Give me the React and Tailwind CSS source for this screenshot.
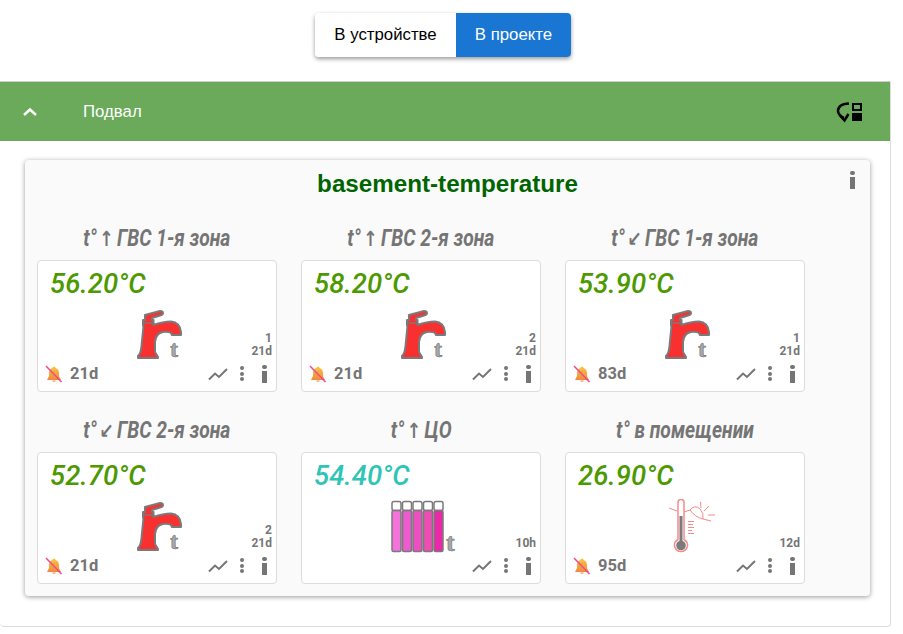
import React from 'react';

const Faucet = () => (
  <svg width="52" height="56" viewBox="0 0 52 56" className="block">
    <path
      d="M10 7 L25 3 Q28 3 28 5 Q28 7 25 7.500 L17 10 L17 12 L18.500 12 L18.500 17 Q28 13.500 36 13.500 Q45 14.500 46 24 L46 27 L37 27 L36 25 Q34 23.500 28 24 Q21 25 20 34 L20 44 L23 49 L23 50 L3 50 L3 48 Q6 45 6.500 38 L8.500 18 L8 18 L8 12 L10 12 Z"
      fill="#f93030"
      stroke="#7a7a7a"
      strokeWidth="2"
      strokeLinejoin="round"
    />
    <path d="M8.500 15 L18 15" stroke="#7a7a7a" strokeWidth="1.500" />
    <text x="35" y="49" fontSize="24" fontWeight="700" fill="#a8a8a8" stroke="#6f6f6f" strokeWidth="0.6" fontFamily="Liberation Serif, serif">t</text>
  </svg>
);

const Radiator = () => (
  <svg width="72" height="60" viewBox="0 0 72 60" className="block">
    {['#f472dc', '#ee5ad0', '#ec4fc0', '#ee4db4', '#ea28a8'].map((c, i) => (
      <g key={c}>
        <rect x={3 + i * 10.5} y="1.500" width="9" height="9" rx="2" fill="#fff" stroke="#7a7a7a" strokeWidth="1.500" />
        <rect x={3 + i * 10.5} y="10.500" width="9" height="41" rx="1.500" fill={c} stroke="#7a7a7a" strokeWidth="1.500" />
      </g>
    ))}
    <text x="57" y="51" fontSize="26" fontWeight="700" fill="#a8a8a8" stroke="#6f6f6f" strokeWidth="0.6" fontFamily="Liberation Serif, serif">t</text>
  </svg>
);

const Thermometer = () => (
  <svg width="48" height="56" viewBox="0 0 48 56" className="block">
    <path d="M0 9 L8 12 M15 13 L21 11 M31.500 3 L32 9 M40 7 L35 12 M39 16 L46 16 M34 20 L42 22" stroke="#f48a8a" strokeWidth="1" fill="none" />
    <path d="M21 11 Q26 5 31 10 Q35 14 34 20 Q26 18 21 11 Z" fill="#fff" stroke="#f48a8a" strokeWidth="1" />
    <path d="M9 3 Q9 0.500 12 0.500 Q15 0.500 15 3 L15 40.500 Q19 43 18.500 47 Q17 52.500 12 52.500 Q7 52.500 5.500 47 Q5 43 9 40.500 Z" fill="#fff" stroke="#f48a8a" strokeWidth="1.500" />
    <rect x="10.500" y="17" width="3" height="28" fill="#7a7a7a" />
    <circle cx="12" cy="46.500" r="4.800" fill="#7a7a7a" />
    <path d="M19 22.500 H25 M19 25.500 H24 M19 28.500 H25 M19 31.500 H23 M19 34.500 H25" stroke="#f48a8a" strokeWidth="1" />
  </svg>
);

const MutedBell = () => (
  <svg width="18" height="18" viewBox="0 0 18 18" className="block">
    <defs>
      <linearGradient id="bell" x1="0" y1="0" x2="0" y2="1">
        <stop offset="0" stopColor="#f9c441" />
        <stop offset="1" stopColor="#f08a3c" />
      </linearGradient>
    </defs>
    <path d="M9 1.500 Q10.500 1.500 10.500 3 Q14 4 14 8 L14 11 L16 15 L2 15 L4 11 L4 8 Q4 4 7.500 3 Q7.500 1.500 9 1.500 Z" fill="url(#bell)" />
    <path d="M7 15.500 Q9 18 11 15.500 Z" fill="#f08a3c" />
    <path d="M1 1 L16.500 17" stroke="#f0468c" strokeWidth="1.500" />
  </svg>
);

const Chart = () => (
  <svg width="20" height="14" viewBox="0 0 20 14" className="block">
    <path d="M1 12.500 L7 6.500 L11 10 L19 2" fill="none" stroke="#757575" strokeWidth="2" />
  </svg>
);

const Dots = () => (
  <div className="flex flex-col gap-[1.500px] items-center">
    <span className="block w-[4px] h-[4px] rounded-full bg-[#757575]" />
    <span className="block w-[4px] h-[4px] rounded-full bg-[#757575]" />
    <span className="block w-[4px] h-[4px] rounded-full bg-[#757575]" />
  </div>
);

const Info = ({ className = '' }) => (
  <div className={`flex flex-col items-center gap-[2px] ${className}`}>
    <span className="block w-[5px] h-[4px] rounded-full bg-[#757575]" />
    <span className="block w-[5px] h-[12px] bg-[#757575]" />
  </div>
);

const Widget = ({ title, arrow, rest, value, color = 'text-[#4c9900]', icon, iconClass, top, age, muted }) => (
  <div className="w-[240px] mr-6">
    <div className="h-[41px] pb-[2px] flex items-center justify-center">
      <span className="text-[23.500px] leading-none font-bold italic text-[#757575] whitespace-nowrap scale-x-[0.82]">
        {title}
        {arrow && <span className="ml-[3px] mr-[4px] font-bold not-italic text-[#757575] font-['DejaVu_Sans',sans-serif] text-[21px]">{arrow}</span>}
        {rest}
      </span>
    </div>
    <div className="relative h-[132px] bg-white border border-[#dcdcdc] rounded-[4px]">
      <div className={`pl-[12px] pt-[6px] text-[27.500px] leading-[34px] font-medium italic ${color}`}>{value}</div>
      <div className={`absolute ${iconClass}`}>{icon}</div>
      <div className="absolute right-[4px] bottom-[33px] text-right text-[12px] leading-[13px] font-bold text-[#757575]">
        {top && <div>{top}</div>}
        <div>{age}</div>
      </div>
      <div className="absolute left-[7px] right-[8px] bottom-[8px] h-[18px] flex items-center">
        {muted && (
          <>
            <MutedBell />
            <span className="ml-[7px] text-[16.500px] font-bold text-[#757575]">{muted}</span>
          </>
        )}
        <div className="ml-auto flex items-center -mt-[1px]">
          <Chart />
          <div className="ml-[12px]"><Dots /></div>
          <Info className="ml-[18px] mr-[1px]" />
        </div>
      </div>
    </div>
  </div>
);

const faucetPos = 'left-[97px] top-[47px]';

const widgets = [
  { title: 't°', arrow: '↑', rest: 'ГВС 1-я зона', value: '56.20°C', top: '1', age: '21d', muted: '21d' },
  { title: 't°', arrow: '↑', rest: 'ГВС 2-я зона', value: '58.20°C', top: '2', age: '21d', muted: '21d' },
  { title: 't°', arrow: '↙', rest: 'ГВС 1-я зона', value: '53.90°C', top: '1', age: '21d', muted: '83d' },
  { title: 't°', arrow: '↙', rest: 'ГВС 2-я зона', value: '52.70°C', top: '2', age: '21d', muted: '21d' },
];

export default function App() {
  return (
    <div className="w-[903px] h-[634px] bg-white overflow-hidden font-['Roboto',sans-serif]">
      <div className="flex justify-center pt-[13px] pr-[17px]">
        <div className="flex h-[44px] rounded-[4px] overflow-hidden shadow-[0_2px_4px_rgba(0,0,0,0.4)] text-[16.800px] font-['Liberation_Sans',sans-serif]">
          <div className="w-[141px] bg-white text-black flex items-center justify-center">В устройстве</div>
          <div className="w-[115px] bg-[#1976d2] text-white flex items-center justify-center">В проекте</div>
        </div>
      </div>

      <div className="mt-[24px] w-[891px] h-[546px] border-r border-b border-[#dcdcdc] rounded-b-[4px]">
        <div className="h-[60px] bg-[#6aaa5a] border-t border-[#d0d0d0] flex items-center text-white">
          <svg width="16" height="10" viewBox="0 0 16 10" className="ml-[22px]">
            <path d="M2 8 L8 2.500 L14 8" fill="none" stroke="#fff" strokeWidth="2.500" />
          </svg>
          <span className="ml-[45px] text-[16.800px] font-['Liberation_Sans',sans-serif]">Подвал</span>
          <svg width="28" height="22" viewBox="0 0 28 22" className="ml-auto mr-[26px]">
            <path d="M13 2.500 Q2 3 2 10 Q2 14 8 17" fill="none" stroke="#000" strokeWidth="2.500" />
            <path d="M3.500 14 L8.500 19.500 L12.500 13" fill="none" stroke="#000" strokeWidth="2.500" />
            <rect x="17" y="3" width="8" height="6" fill="none" stroke="#000" strokeWidth="2" />
            <rect x="16" y="12" width="10" height="8" fill="#000" />
          </svg>
        </div>
        <div className="pt-[19px] pl-[25px]">
          <div className="relative w-[845px] h-[436px] bg-[#fafafa] rounded-[4px] shadow-[0_1px_5px_rgba(0,0,0,0.4)] pl-[12px] pt-[59px]">
            <div className="absolute left-0 right-0 top-[9px] text-center text-[24.200px] leading-[30px] font-bold text-[#006400] font-['Liberation_Sans',sans-serif]">basement-temperature</div>
            <Info className="absolute right-[15px] top-[11px]" />
            <div className="flex flex-wrap gap-y-[19px]">
              {widgets.map((w) => (
                <Widget key={w.value} {...w} icon={<Faucet />} iconClass={faucetPos} />
              ))}
              <Widget title="t°" arrow="↑" rest="ЦО" value="54.40°C" color="text-[#2ec4b6]" age="10h" icon={<Radiator />} iconClass="left-[87px] top-[47px]" />
              <Widget title="t° в помещении" value="26.90°C" age="12d" muted="95d" icon={<Thermometer />} iconClass="left-[103px] top-[46px]" />
            </div>
          </div>
        </div>
      </div>
    </div>
  );
}
